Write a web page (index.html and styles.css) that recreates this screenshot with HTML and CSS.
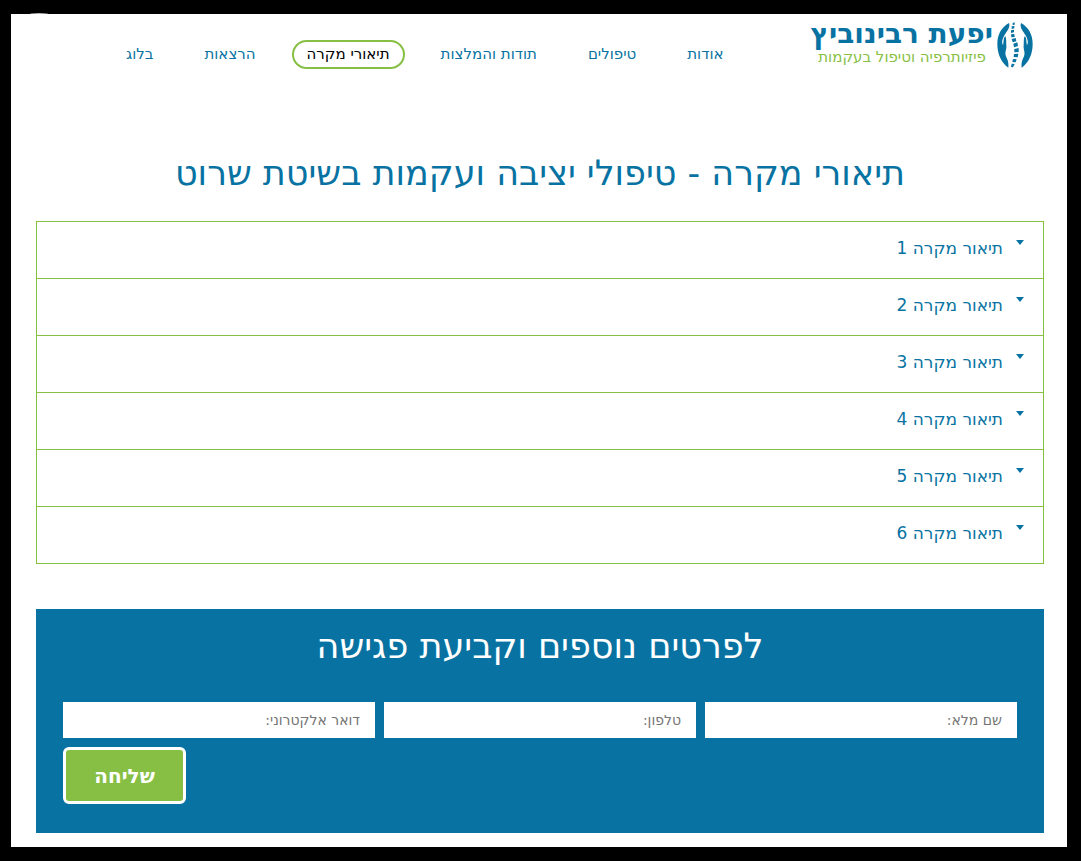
FILE: index.html
```html
<!DOCTYPE html>
<html lang="he" dir="rtl">
<head>
    <meta charset="UTF-8">
    <meta name="viewport" content="width=device-width, initial-scale=1.0">
    <title>תיאורי מקרה - יפעת רבינוביץ</title>
    <link rel="stylesheet" href="styles.css">
</head>
<body>
    <div class="page">
        <span class="corner-badge"></span>

        <header class="header">
            <a class="logo" href="#">
                <svg class="logo-icon" viewBox="0 0 108 141" aria-hidden="true">
                    <!-- left hand -->
                    <path d="M36 3 C12 17 1 39 1 66 C1 97 13 122 34 137 C36 121 31 112 27 103 C22 91 30 82 28 70 C27 61 29 50 25 43 C19 46 21 56 18 70 C13 60 16 52 21 42 C28 29 41 18 36 3 Z"/>
                    <!-- right hand -->
                    <path d="M72 3 C96 17 107 39 107 66 C107 97 95 122 74 137 C72 121 77 112 81 103 C86 91 78 82 80 70 C81 61 79 50 83 43 C89 46 87 56 90 70 C95 60 92 52 87 42 C80 29 67 18 72 3 Z"/>
                    <!-- spine -->
                    <path d="M47 3 l6 -2 v7 l-6 1 Z M44 13 l8 -1 v7 l-8 2 Z M42 25 l9 -2 v8 l-9 2 Z M42 37 l10 -1 l1 9 l-10 1 Z M44 51 l12 -3 l2 10 l-11 3 Z M49 65 l12 -4 l2 11 l-12 4 Z M52 81 l13 -3 v12 l-13 1 Z M51 96 l13 -1 l-2 11 l-12 -1 Z M48 111 l11 1 l-3 9 l-10 -1 Z M44 125 l9 1 l-5 10 l-6 -1 Z"/>
                </svg>
                <span class="logo-text">
                    <span class="logo-name">יפעת רבינוביץ</span>
                    <span class="logo-tagline">פיזיותרפיה וטיפול בעקמות</span>
                </span>
            </a>
            <nav class="nav">
                <a href="#">אודות</a>
                <a href="#">טיפולים</a>
                <a href="#">תודות והמלצות</a>
                <a class="active" href="#">תיאורי מקרה</a>
                <a href="#">הרצאות</a>
                <a href="#">בלוג</a>
            </nav>
        </header>

        <main class="content">
            <h1>תיאורי מקרה - טיפולי יציבה ועקמות בשיטת שרוט</h1>

            <div class="accordion">
                <details>
                    <summary>תיאור מקרה 1</summary>
                </details>
                <details>
                    <summary>תיאור מקרה 2</summary>
                </details>
                <details>
                    <summary>תיאור מקרה 3</summary>
                </details>
                <details>
                    <summary>תיאור מקרה 4</summary>
                </details>
                <details>
                    <summary>תיאור מקרה 5</summary>
                </details>
                <details>
                    <summary>תיאור מקרה 6</summary>
                </details>
            </div>

            <section class="contact">
                <h2>לפרטים נוספים וקביעת פגישה</h2>
                <form class="contact-form">
                    <input type="text" name="name" placeholder="שם מלא:" aria-label="שם מלא">
                    <input type="tel" name="phone" placeholder="טלפון:" aria-label="טלפון">
                    <input type="email" name="email" placeholder="דואר אלקטרוני:" aria-label="דואר אלקטרוני">
                    <button type="submit">שליחה</button>
                </form>
            </section>
        </main>
    </div>
</body>
</html>
```
FILE: styles.css
```css
* { box-sizing: border-box; }
body { margin: 0; padding: 14px 14px 14px 11px; background-color: #000; color: #0873a2; font-family: "DejaVu Sans", sans-serif; }
a { color: inherit; text-decoration: none; }

.page { position: relative; background: #fff; padding-bottom: 14px; }
.corner-badge { position: absolute; top: -1px; left: 17px; width: 22px; height: 4px; border-radius: 50%; background: #bbb; z-index: -1; }

/* header */
.header { display: flex; align-items: flex-start; padding: 8px 34px 0; gap: 72px; }
.logo { display: flex; gap: 4px; flex: none; }
.logo-icon { width: 36px; height: 47px; fill: #0873a2; }
.logo-text { display: flex; flex-direction: column; }
.logo-name { font-size: 28px; font-weight: 700; line-height: 24px; }
.logo-tagline { padding-right: 7px; font-size: 15px; line-height: 22px; color: #87bf45; }
.nav { display: flex; gap: 21px; padding-top: 18px; }
.nav a { border: 2px solid transparent; border-radius: 15px; padding: 0 13px; font-size: 15px; line-height: 25px; white-space: nowrap; }
.nav .active { border-color: #87bf45; color: #000; }

/* content */
.content { padding: 0 23px 0 25px; }
h1, h2 { margin: 0; font-weight: 400; font-size: 35px; line-height: 40px; text-align: center; }
h1 { padding-top: 84px; margin-bottom: 28px; }

.accordion { border: 1px solid #87bf45; }
.accordion details + details { border-top: 1px solid #87bf45; }
.accordion summary { display: flex; gap: 13px; padding: 13px 19px 17px; font-size: 17px; line-height: 26px; list-style: none; cursor: pointer; }
.accordion summary::before { content: ""; align-self: flex-start; margin-top: 5px; border: 4px solid transparent; border-top: 5px solid #0873a2; border-bottom: 0; }

/* contact form */
.contact { margin-top: 45px; padding: 17px 27px 29px; background: #0873a2; }
.contact h2 { color: #fff; margin-bottom: 36px; }
.contact-form { display: grid; grid-template-columns: repeat(3, 1fr); gap: 9px; }
.contact-form input { min-width: 0; height: 36px; border: 0; padding: 0 15px; font-family: inherit; font-size: 14px; text-align: right; direction: rtl; }
.contact-form input::placeholder { color: #757575; }
.contact-form button { grid-column: 3; justify-self: end; width: 123px; height: 57px; border: 3px solid #fff; border-radius: 6px; background: #87bf45; color: #fff; font-family: inherit; font-size: 20px; font-weight: 700; cursor: pointer; }
```
